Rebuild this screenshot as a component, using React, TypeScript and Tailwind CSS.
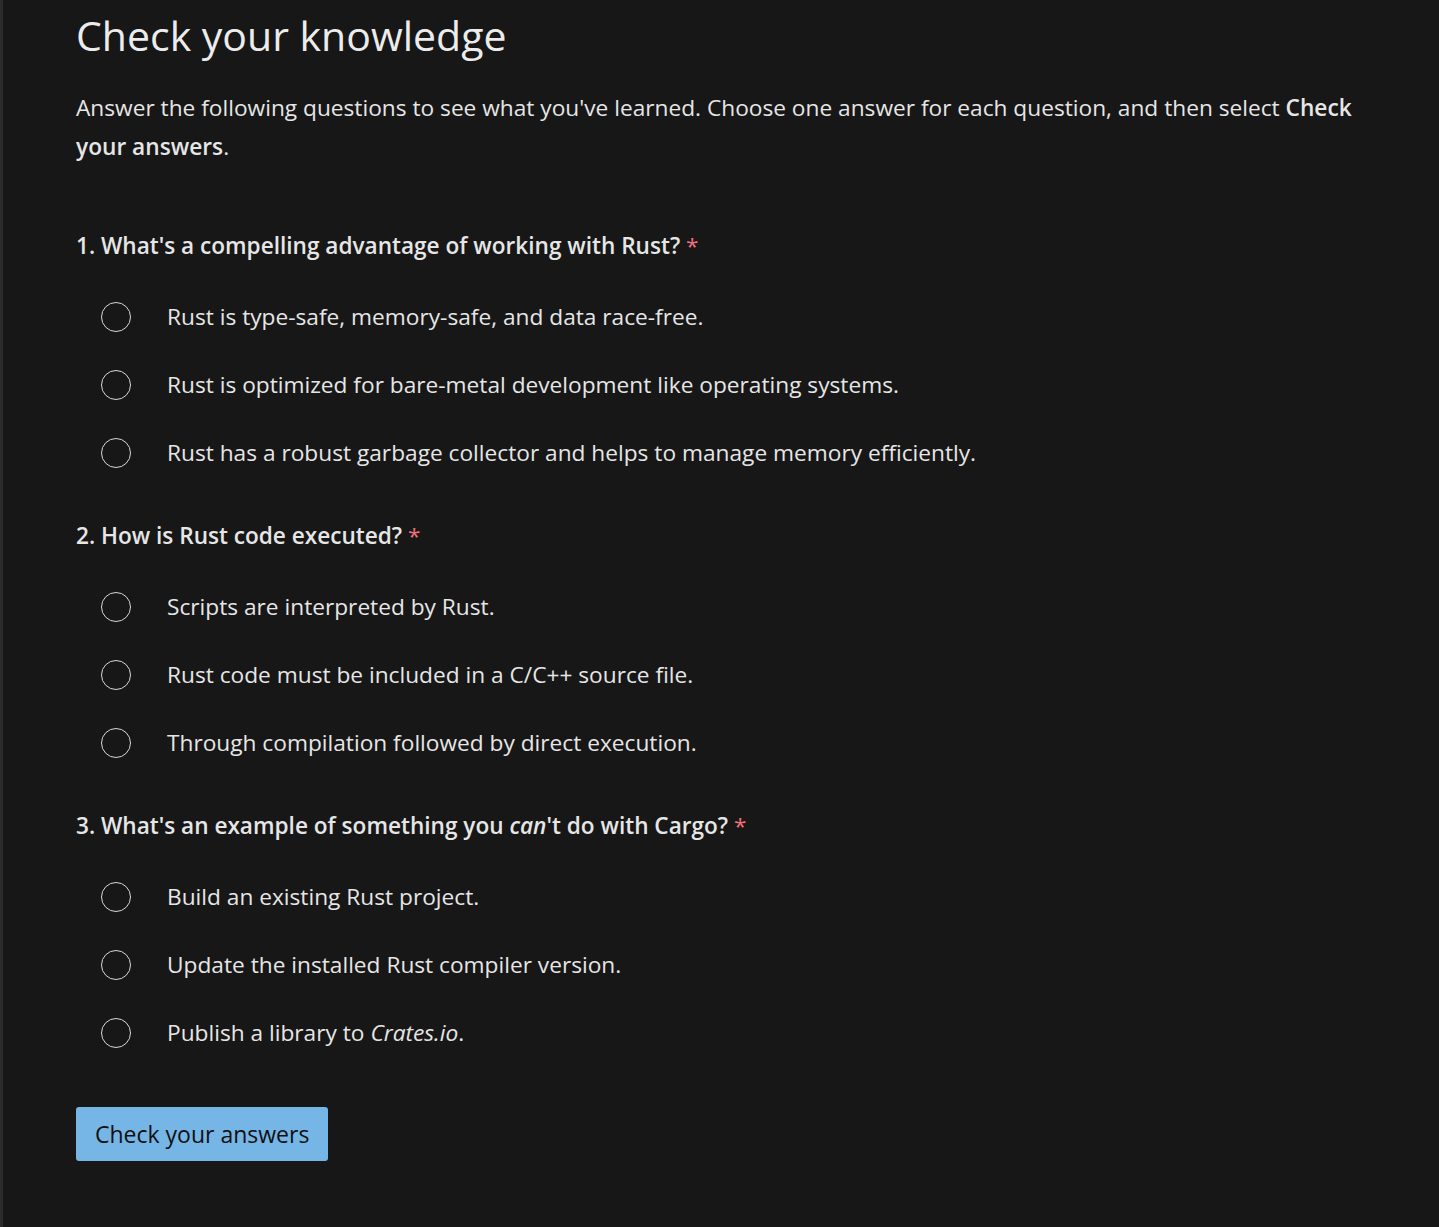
const questions = [
  {
    title: <>1. What's a compelling advantage of working with Rust?</>,
    options: [
      <>Rust is type-safe, memory-safe, and data race-free.</>,
      <>Rust is optimized for bare-metal development like operating systems.</>,
      <>Rust has a robust garbage collector and helps to manage memory efficiently.</>,
    ],
  },
  {
    title: <>2. How is Rust code executed?</>,
    options: [
      <>Scripts are interpreted by Rust.</>,
      <>Rust code must be included in a C/C++ source file.</>,
      <>Through compilation followed by direct execution.</>,
    ],
  },
  {
    title: (
      <>
        3. What's an example of something you <em>can</em>'t do with Cargo?
      </>
    ),
    options: [
      <>Build an existing Rust project.</>,
      <>Update the installed Rust compiler version.</>,
      <>
        Publish a library to <em>Crates.io</em>.
      </>,
    ],
  },
];

const App = () => {
  return (
    <div className="min-h-[1227px] bg-[#171717] border-l-[3px] border-[#2b2b2b] text-[#e6e6e6] font-['Open_Sans',sans-serif]">
      <div className="pl-[73px] pr-[80px] pt-[7px] pb-[66px]">
        {/* Header */}
        <h1 className="text-[41px] leading-[56px] font-normal text-[#ececec]">Check your knowledge</h1>
        <p className="mt-[25px] text-[22.7px] leading-[39px]">
          Answer the following questions to see what you've learned. Choose one answer for each question, and then
          select <strong className="font-semibold">Check</strong> <strong className="font-semibold">your answers</strong>.
        </p>

        {/* Questions */}
        <div className="mt-[62px] flex flex-col gap-[50px]">
          {questions.map((q, i) => (
            <fieldset key={i}>
              <legend className="text-[22.6px] leading-[36px] font-semibold">
                {q.title} <span className="text-[#f1707b] font-normal">*</span>
              </legend>
              <div className="mt-[38px] flex flex-col gap-[38px]">
                {q.options.map((opt, j) => (
                  <label key={j} className="flex items-center h-[30px] pl-[25px] cursor-pointer">
                    <span className="w-[30px] h-[30px] rounded-full border-[1.5px] border-[#d8d8d8] shrink-0" />
                    <span className="ml-[36px] text-[22.7px] leading-[30px]">{opt}</span>
                  </label>
                ))}
              </div>
            </fieldset>
          ))}
        </div>

        <button className="mt-[59px] h-[54px] px-[19px] rounded-[3px] bg-[#75b6e7] text-[#101010] text-[23px]">
          Check your answers
        </button>
      </div>
    </div>
  );
};

export default App;
